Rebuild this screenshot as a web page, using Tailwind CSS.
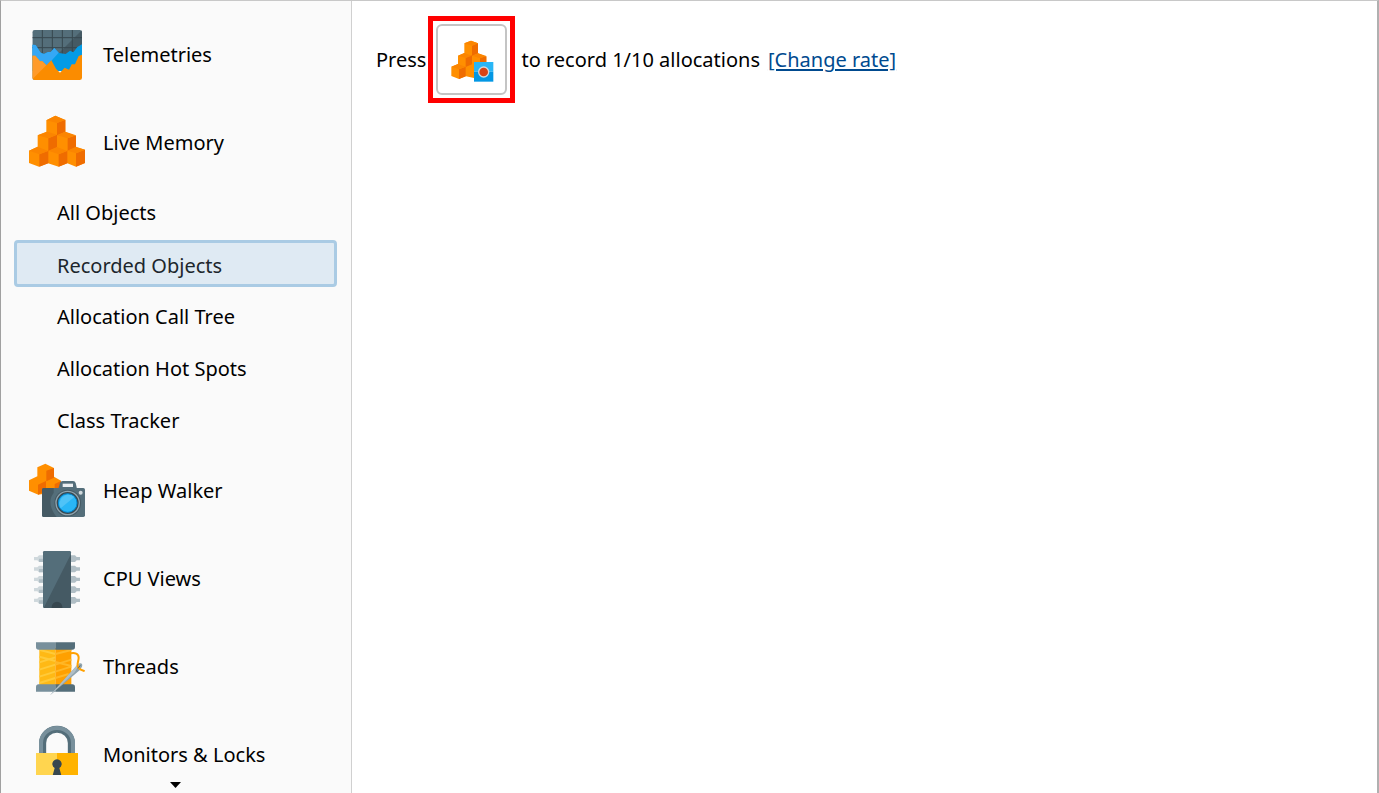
<!DOCTYPE html>
<html lang="en">
  <head>
    <meta charset="UTF-8" />
    <meta name="viewport" content="width=device-width, initial-scale=1.0" />
    <title>Recorded Objects</title>
    <script src="https://cdn.jsdelivr.net/npm/@tailwindcss/browser@4"></script>
  </head>
  <body class="bg-white text-black">
    <div
      class="flex h-screen border-t border-l border-r-2 border-t-[#c8c8c8] border-l-[#a0a0a0] border-r-[#b0b0b0] font-['Noto_Sans',sans-serif] text-[20px] leading-7"
    >
      <aside
        class="flex w-[351px] shrink-0 flex-col border-r border-[#d0d0d0] bg-[#fafafa]"
      >
        <nav class="min-h-0 flex-1 overflow-hidden pt-[10px] pr-[14px] pl-[13px]">
          <ul>
            <li>
              <a href="#telemetries" class="flex h-[88px] items-center gap-[18px] pl-[15px]">
                <svg class="size-14 shrink-0 overflow-visible" viewBox="27 21 168 168">
                  <clipPath id="chart"><rect x="37" y="30" width="149" height="150" rx="7" /></clipPath>
                  <g clip-path="url(#chart)">
                    <path fill="#546e7a" d="M37 30h149v90H37z" />
                    <path fill="#455a64" d="M186 30v90H96z" />
                    <path stroke="#37474f" stroke-width="3" d="M37 53h149M37 83h149M67 30v80M97 30v80M127 30v80M157 30v80" />
                    <path fill="#039be5" d="M37 74l10 1 15 23 10 4 12-6h8l11-12 14 15 20 3 13-10 10 5 12-16 14-8v80H37z" />
                    <path fill="#35a8f5" d="M37 74l10 1 15 23 10 4 12-6h8l11-12 13 14-38 42-20 40H37z" />
                    <path fill="#fb8c00" d="M37 107h9l14 17h7l12 12 15-15 14 25 12 12 14-15 13 6 8-16h10l11-25 10-4v76H37z" />
                    <path fill="#ff9b2a" d="M37 107h9l14 17h7l12 12-42 42z" />
                  </g>
                </svg>
                Telemetries
              </a>
            </li>
            <li>
              <a href="#live-memory" class="flex h-[88px] items-center gap-[18px] pl-[15px]">
                <svg class="size-14 shrink-0 overflow-visible" viewBox="27 21 168 168">
                  <path fill="#ff8f00" d="M79 37l27-14 30 13v36l32 12v34l27 7v40l-27 11-26-10-26 10-32-10-27 10-30-11v-37l26-12V82l26-11z" />
                  <path fill="#ef6c00" d="M111 45l25-10v36l-25 11zM85 91l26-11v38l-26 12zM143 91l25-9v36l-25 11zM58 139l27-11v38l-27 10zM116 139l26-11v38l-26 10zM168 136l27-11v40l-27 11z" />
                  <path fill="#fb8500" d="M79 37l32 8 25-9-30-13zM53 82l32 9 26-11-28-9zM111 82l32 9 25-9-32-11zM27 128l31 11 27-10-32-13zM85 128l31 11 26-10-31-12zM142 128l26 8 27-11-27-9z" />
                </svg>
                Live Memory
              </a>
              <ul>
                <li>
                  <a href="#all-objects" class="flex h-[52px] items-center pl-[43px]">All Objects</a>
                </li>
                <li class="h-[52px] pt-px">
                  <a
                    href="#recorded-objects"
                    aria-current="page"
                    class="flex h-[47px] items-center rounded-sm border-3 border-[#aacbe4] bg-[#dfeaf3] pt-1 pl-[40px] text-[#1c262c]"
                    >Recorded Objects</a
                  >
                </li>
                <li>
                  <a href="#call-tree" class="flex h-[52px] items-center pl-[43px]">Allocation Call Tree</a>
                </li>
                <li>
                  <a href="#hot-spots" class="flex h-[52px] items-center pl-[43px]">Allocation Hot Spots</a>
                </li>
                <li>
                  <a href="#class-tracker" class="flex h-[52px] items-center pl-[43px]">Class Tracker</a>
                </li>
              </ul>
            </li>
            <li>
              <a href="#heap-walker" class="flex h-[88px] items-center gap-[18px] pl-[15px]">
                <svg class="size-14 shrink-0 overflow-visible" viewBox="27 15 168 168">
                  <path fill="#ff8f00" d="M52 28l24-11 26 13v26l21 12v30l-68 12-28-12V67l25-12z" />
                  <path fill="#ef6c00" d="M79 38l23-8v29l-23 11zM54 80l24-11v29l-24 12zM104 78l19-9v22h-19z" />
                  <path fill="#546e7a" d="M115 92l5-17q2-6 8-6h31q6 0 8 6l4 17z" />
                  <path fill="#eceff1" d="M128 77h31v10h-31z" />
                  <rect x="66" y="90" width="129" height="87" rx="5" fill="#546e7a" />
                  <path fill="#455a64" d="M71 90h30v15c-14 16-14 44 9 72H71q-5 0-5-5V95q0-5 5-5z" />
                  <circle cx="143" cy="135" r="40" fill="#455a64" />
                  <circle cx="143" cy="135" r="35" fill="#37474f" stroke="#90a4ae" stroke-width="4" />
                  <circle cx="143" cy="135" r="28" fill="#29b6f6" stroke="#0288d1" stroke-width="3" />
                  <path fill="#4fc3f7" d="M122 151a27 27 0 0 1 41-34z" />
                  <circle cx="182" cy="104" r="6" fill="#cfd8dc" />
                </svg>
                Heap Walker
              </a>
            </li>
            <li>
              <a href="#cpu-views" class="flex h-[88px] items-center gap-[18px] pl-[15px]">
                <svg class="size-14 shrink-0 overflow-visible" viewBox="27 21 168 168">
                  <path fill="#cfd8dc" d="M42 39h10l5-5h12v20H57l-5-5H42zM42 70h10l5-5h12v20H57l-5-5H42zM42 101h10l5-5h12v20H57l-5-5H42zM42 132h10l5-5h12v20H57l-5-5H42zM42 164h10l5-5h12v20H57l-5-5H42z" />
                  <path fill="#b0bec5" d="M180 39h-10l-5-5h-12v20h12l5-5h10zM180 70h-10l-5-5h-12v20h12l5-5h10zM180 101h-10l-5-5h-12v20h12l5-5h10zM180 132h-10l-5-5h-12v20h12l5-5h10zM180 164h-10l-5-5h-12v20h12l5-5h10zM57 44h12v10H57zM57 75h12v10H57zM57 106h12v10H57zM57 137h12v10H57zM57 169h12v10H57z" />
                  <rect x="69" y="21" width="84" height="171" rx="4" fill="#546e7a" />
                  <path fill="#455a64" d="M153 30v158q0 4-4 4H71z" />
                  <path fill="#37474f" d="M95 192v-3a16 16 0 0 1 32 0v3z" />
                </svg>
                CPU Views
              </a>
            </li>
            <li>
              <a href="#threads" class="flex h-[88px] items-center gap-[18px] pl-[15px]">
                <svg class="size-14 shrink-0 overflow-visible" viewBox="27 15 168 168">
                  <path fill="#ffb915" d="M58 42h48v112H58z" />
                  <path fill="#ffa000" d="M106 42h48v112h-48z" />
                  <path stroke="#ffca3a" stroke-width="6" d="M58 68l48 13M58 85l48-15M58 107l48-15M58 128l48-15M58 147l48-15M60 48l46 12" />
                  <path stroke="#ffb727" stroke-width="6" d="M106 60l48-12M106 84l48 12M106 92l48-15M106 113l48-15M106 132l40-12" />
                  <path fill="#78909c" d="M48 25h58v22H56q-8 0-8-8zM56 151h50v22H48v-14q0-8 8-8z" />
                  <path fill="#546e7a" d="M106 25h59v14q0 8-8 8h-51zM106 151h51q8 0 8 8v14h-59z" />
                  <path fill="#90a4ae" d="M90 184l77-86q6-9 14-10 8 1 5 10l-7 11z" />
                  <path fill="#b0bec5" d="M90 184l77-86q6-9 14-10l-18 28z" />
                  <path fill="none" stroke="#ffa000" stroke-width="6" d="M152 58c12-3 24 1 24 13 0 10-8 24 0 31 6 6 8 6 18 9" />
                  <path stroke="#546e7a" stroke-width="3" d="M174 103l7-9" />
                </svg>
                Threads
              </a>
            </li>
            <li>
              <a href="#monitors" class="flex h-[88px] items-center gap-[18px] pl-[15px]">
                <svg class="size-14 shrink-0 overflow-visible" viewBox="27 27 168 168">
                  <path fill="none" stroke="#546e7a" stroke-width="21" d="M68 106V75a43 41 0 0 1 86 0v31" />
                  <path fill="none" stroke="#78909c" stroke-width="12" d="M63 106V75a48 45 0 0 1 96 0v31" />
                  <path fill="#ffd54f" d="M48 105h63v90H48z" />
                  <path fill="#ffb300" d="M111 105h63v90h-63z" />
                  <path fill="#37474f" d="M98 172l6-22a14 14 0 1 1 14 0l6 22z" />
                </svg>
                Monitors &amp; Locks
              </a>
            </li>
          </ul>
        </nav>
        <button type="button" aria-label="Scroll down" class="flex h-[18px] shrink-0 justify-center pt-[7px]">
          <svg class="h-[6px] w-3" viewBox="0 0 12 6"><path d="M0 0h11L5.500 6z" /></svg>
        </button>
      </aside>

      <main class="min-w-0 flex-1 pt-[15px] pl-6">
        <div class="flex items-center">
          <span>Press</span>
          <div class="ml-0.5 border-5 border-[#ff0000] p-[3px]">
            <button
              type="button"
              aria-label="Record allocations"
              class="flex size-[71px] items-center justify-center rounded-md border-2 border-[#c4c4c4] bg-white"
            >
              <svg class="size-12 shrink-0" viewBox="83 76 144 144">
                <path fill="#ff8f00" d="M132 98L152 90L173 98V128L198 138V166H161V202L137 197L116 205L93 196V168L113 160V135L132 127Z" />
                <path fill="#ef6c00" d="M155 105l18-7v30l-18 8zM136 141l19-8v28l-19 8zM179 143l19-7v22h-19zM116 176l20-8v29l-20 8z" />
                <path fill="#fb8500" d="M132 98l23 7 18-7-21-8zM113 135l23 7 19-7-23-8zM155 135l24 8 19-7-25-8zM93 168l23 8 20-8-23-8z" />
                <path fill="#29b6f6" d="M161 154h58v29h-58z" />
                <path fill="#0397e4" d="M161 183h58v30h-58z" />
                <circle cx="190" cy="184" r="15" fill="#d84315" stroke="#cfd8dc" stroke-width="4" />
              </svg>
            </button>
          </div>
          <span class="ml-[6px]">to record 1/10 allocations</span>
          <a href="#change-rate" class="ml-2 text-[#004a8f] underline decoration-2 underline-offset-2">[Change rate]</a>
        </div>
      </main>
    </div>
  </body>
</html>
